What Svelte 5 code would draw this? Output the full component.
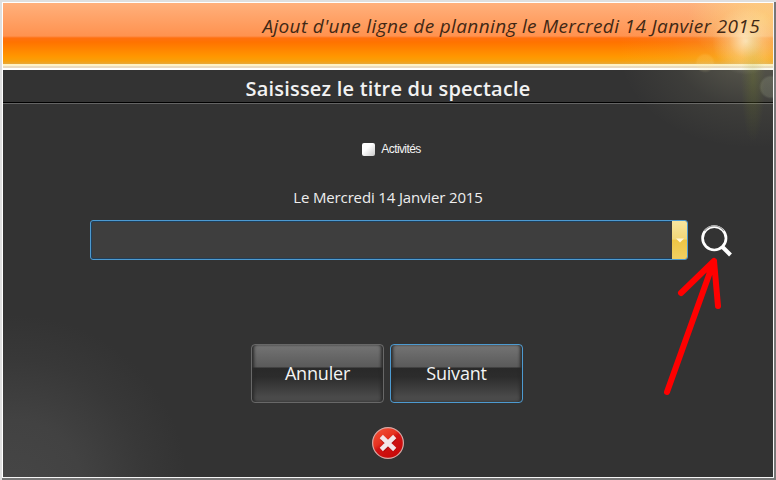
<script>

    let activites = $state(false);
    let spectacle = $state('');

    const date = 'Mercredi 14 Janvier 2015';

</script>

<div class="window">
    <div class="header">
        <span class="caption">Ajout d'une ligne de planning le {date}</span>
    </div>
    <div class="stripe"></div>

    <div class="content">
        <div class="subtitle"><span>Saisissez le titre du spectacle</span></div>

        <label class="check">
            <input type="checkbox" bind:checked={activites} />
            <span>Activités</span>
        </label>

        <div class="date"><span>Le {date}</span></div>

        <div class="search">
            <div class="combo">
                <input type="text" bind:value={spectacle} aria-label="Spectacle" />
                <button class="drop" aria-label="Ouvrir la liste">
                    <svg width="8" height="5" viewBox="0 0 8 5"><path d="M0 0.5h8L4 4.5z" fill="#fff6d8" /></svg>
                </button>
            </div>
            <button class="loupe" aria-label="Rechercher">
                <svg width="34" height="36" viewBox="0 0 34 36" fill="none">
                    <circle cx="14.3" cy="16.3" r="11.7" stroke="#fff" stroke-width="2.7" />
                    <path d="M4.5 9a12 12 0 0 1 19.5 0" stroke="#999" stroke-width="1.2" />
                    <path d="M21.5 24L30.5 33" stroke="#fff" stroke-width="4" />
                </svg>
            </button>
        </div>

        <div class="buttons">
            <button class="btn">Annuler</button>
            <button class="btn focus">Suivant</button>
        </div>

        <button class="close" aria-label="Fermer">
            <svg width="34" height="34" viewBox="0 0 34 34">
                <defs>
                    <linearGradient id="rouge" x1="0" y1="0" x2="0.7" y2="1">
                        <stop offset="0" stop-color="#f5583c" />
                        <stop offset="0.45" stop-color="#e63220" />
                        <stop offset="0.55" stop-color="#d01414" />
                        <stop offset="1" stop-color="#c80808" />
                    </linearGradient>
                </defs>
                <circle cx="17" cy="17" r="15.4" fill="url(#rouge)" stroke="#d5a8a4" stroke-width="1.2" />
                <path d="M11 12.5L24 24M23.5 12L11.5 24" stroke="#8d0808" stroke-width="5" opacity="0.5" />
                <path d="M10.3 10.5L23.7 23.5M23.7 10.5L10.3 23.5" stroke="#f2e6e8" stroke-width="4.6" />
            </svg>
        </button>
    </div>

    <div class="flare"></div>

    <svg class="arrow" width="76" height="150" viewBox="0 0 76 150">
        <path d="M17 137L64 6M31 38L64 6L68 51" />
    </svg>
</div>

<style>

    :global(body) {
        margin: 0;
        background: #777;
    }

    .window {
        position: relative;
        box-sizing: border-box;
        width: 776px;
        height: 480px;
        padding: 3px;
        overflow: hidden;
        font-family: 'Open Sans', 'Noto Sans', sans-serif;
        background: #333;
        box-shadow: inset 2px 2px 0 #dfdfdf, inset -2px -2px 0 #777, inset 3px 3px 0 #fff, inset -3px -3px 0 #f4f4f4;
    }

    .header {
        box-sizing: border-box;
        height: 61px;
        padding: 9px 13px 0 0;
        text-align: right;
        background: linear-gradient(#ffb07c 0, #ff924f 33px, #ff7010 35px, #ff7200 39px, #ff9800 54px, #f7a00c 58px, #e8a83a 61px);
    }

    .caption {
        position: relative;
        z-index: 1;
        font-size: 19px;
        line-height: 28px;
        font-style: italic;
        color: #3f2815;
        letter-spacing: 0.36px;
        white-space: nowrap;
    }

    .stripe {
        height: 6px;
        background: linear-gradient(#fff3c8 0 2px, #eadbc0 2px 4px, #fff 4px 6px);
    }

    .content {
        display: flex;
        flex-direction: column;
        align-items: center;
        height: 407px;
        background: radial-gradient(circle 175px at 10px 420px, #464646, #424242 40%, #383838 75%, #333 100%), #333;
    }

    .subtitle {
        box-sizing: border-box;
        width: 100%;
        height: 34px;
        padding-top: 5px;
        text-align: center;
        font-size: 20px;
        line-height: 28px;
        font-weight: 600;
        letter-spacing: 0.2px;
        color: #f2f2f2;
        border-bottom: 1px solid #646464;
        box-shadow: inset 0 -1px 0 #000;
    }

    .check {
        display: flex;
        align-items: center;
        gap: 6px;
        margin-top: 37px;
        margin-left: 7px;
        height: 16px;
        font: 12px/16px 'Liberation Sans', sans-serif;
        letter-spacing: -0.6px;
        color: #f4f4f4;
    }

    .check input {
        appearance: none;
        width: 13px;
        height: 13px;
        margin: 0;
        border-radius: 2px;
        background: linear-gradient(135deg, #fff 40%, #c8c8c8);
    }

    .date {
        margin-top: 29px;
        height: 22px;
        font-size: 15px;
        line-height: 22px;
        letter-spacing: -0.15px;
        color: #eee;
    }

    .search {
        display: flex;
        width: 644px;
        height: 40px;
        margin-top: 12px;
        margin-left: 48px;
        gap: 12px;
    }

    .combo {
        box-sizing: border-box;
        display: flex;
        width: 598px;
        height: 40px;
        border: 1px solid #4d9ad0;
        border-radius: 3px;
        background: #3e3e3e;
        box-shadow: inset 0 0 0 1px #1e3f5c;
        overflow: hidden;
    }

    .combo input {
        flex: 1;
        min-width: 0;
        padding: 0 8px;
        border: 0;
        outline: 0;
        background: none;
        color: #fff;
        font: inherit;
    }

    .drop {
        display: flex;
        align-items: center;
        justify-content: center;
        width: 15px;
        padding: 0;
        border: 0;
        background: linear-gradient(#f6e6a0, #f2d778 48%, #edc544 50%, #f0d062);
    }

    .loupe, .close {
        display: block;
        padding: 0;
        border: 0;
        background: none;
    }

    .loupe svg, .close svg {
        display: block;
    }

    .buttons {
        display: flex;
        gap: 6px;
        margin-top: 84px;
        margin-left: -2px;
    }

    .btn {
        box-sizing: border-box;
        width: 133px;
        height: 59px;
        padding: 0 0 2px;
        border: 1px solid #686868;
        border-radius: 4px;
        color: #f4f4f4;
        font: 18px 'Open Sans', 'Noto Sans', sans-serif;
        letter-spacing: -0.2px;
        background: linear-gradient(#747474 0, #5a5a5a 22px, #292929 23px, #2c2c2c 32px, #4a4a4a 52px);
        box-shadow: inset 3px 0 3px -1px #2a2a2a, inset -3px 0 3px -1px #2a2a2a;
    }

    .btn.focus {
        border-color: #4d9ad0;
    }

    .close {
        margin-top: 23px;
    }

    /* sun glow over the top right corner */
    .flare {
        position: absolute;
        top: 3px;
        right: 3px;
        width: 270px;
        height: 150px;
        pointer-events: none;
        background:
            radial-gradient(circle 10px at 202px 60px, rgba(255, 235, 170, 0.12) 75%, transparent),
            radial-gradient(circle 12px at 268px 84px, rgba(180, 190, 160, 0.2) 80%, transparent),
            radial-gradient(ellipse 12px 65px at 250px 75px, rgba(150, 170, 20, 0.16), transparent),
            radial-gradient(circle 34px at 243px 38px, rgba(255, 250, 225, 0.75), rgba(255, 250, 225, 0.25) 50%, transparent),
            radial-gradient(ellipse 75px 50px at 260px 15px, rgba(255, 235, 130, 0.5), transparent),
            radial-gradient(ellipse 135px 100px at 250px 45px, rgba(225, 220, 170, 0.26), rgba(225, 220, 170, 0.06) 60%, transparent);
    }

    .arrow {
        position: absolute;
        left: 650px;
        top: 255px;
        fill: none;
        stroke: #f00;
        stroke-width: 6;
        stroke-linecap: round;
        stroke-linejoin: round;
        pointer-events: none;
    }

</style>
